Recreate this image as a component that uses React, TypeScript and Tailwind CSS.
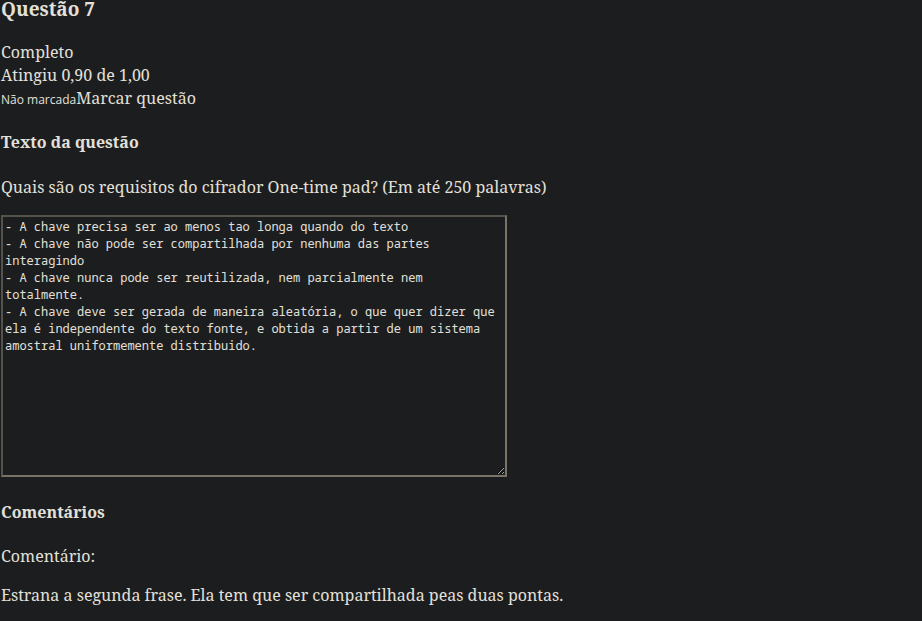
import React from "react";

const serif = { fontFamily: '"Noto Serif", "DejaVu Serif", "Liberation Serif", serif' };

export default function App() {
  const text = `- A chave precisa ser ao menos tao longa quando do texto
- A chave não pode ser compartilhada por nenhuma das partes interagindo
- A chave nunca pode ser reutilizada, nem parcialmente nem totalmente.
- A chave deve ser gerada de maneira aleatória, o que quer dizer que ela é independente do texto fonte, e obtida a partir de um sistema amostral uniformemente distribuido.`;
  return (
    <div className="min-h-[621px] w-full bg-[#1c1d1f] text-[#e3e0da] pl-[1px]" style={serif}>
      <h3 className="m-0 text-[19px] leading-[18px] font-bold font-['Noto_Serif','DejaVu_Serif',serif]">Questão 7</h3>
      <div className="mt-[23px] text-[16px] leading-[23px]">
        <div>Completo</div>
        <div>Atingiu 0,90 de 1,00</div>
        <div>
          <span className="text-[12px] font-['Open_Sans','Noto_Sans',sans-serif]">Não marcada</span>
          <span>Marcar questão</span>
        </div>
      </div>
      <h4 className="mt-[20px] text-[16px] leading-[23px] font-bold">Texto da questão</h4>
      <p className="mt-[22px] text-[16px] leading-[23px]">Quais são os requisitos do cifrador One-time pad? (Em até 250 palavras)</p>
      <textarea
        readOnly
        defaultValue={text}
        className="mt-[16px] block w-[506px] h-[262px] bg-[#1c1d1f] text-[#e3e0da] border-2 border-t-[#55524b] border-l-[#55524b] border-b-[#7a7468] border-r-[#7a7468] px-[2px] py-[1px] text-[12px] leading-[17px] font-['Noto_Sans_Mono','DejaVu_Sans_Mono',monospace] resize"
      />
      <h4 className="mt-[24px] text-[16px] leading-[23px] font-bold">Comentários</h4>
      <p className="mt-[21px] text-[16px] leading-[23px]">Comentário:</p>
      <p className="mt-[16px] text-[16px] leading-[23px]">Estrana a segunda frase. Ela tem que ser compartilhada peas duas pontas.</p>
    </div>
  );
}
